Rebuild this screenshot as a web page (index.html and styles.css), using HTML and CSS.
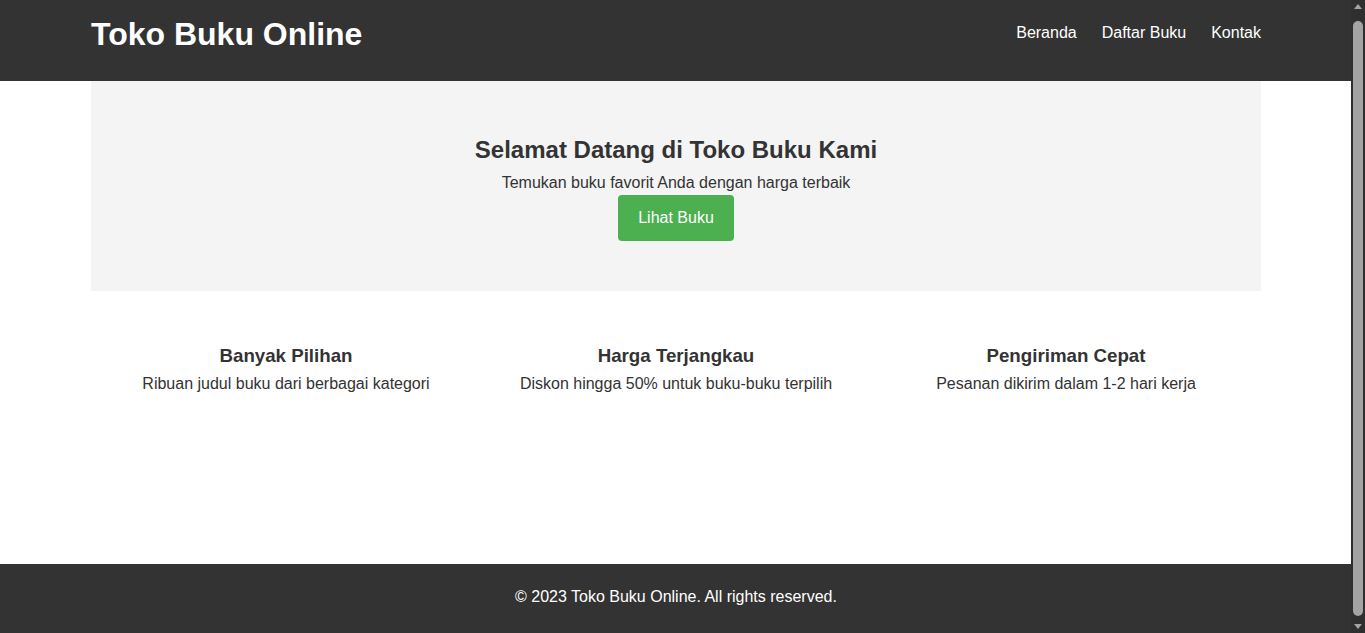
FILE: index.html
```html
<!DOCTYPE html>
<html lang="id">
<head>
<meta charset="utf-8">
<title>Toko Buku Online</title>
<link rel="stylesheet" href="styles.css">
</head>
<body>
<header class="site-header">
  <div class="container header-inner">
    <h1 class="logo">Toko Buku Online</h1>
    <nav class="nav">
      <a href="#">Beranda</a>
      <a href="#">Daftar Buku</a>
      <a href="#">Kontak</a>
    </nav>
  </div>
</header>
<main class="container">
  <section class="hero">
    <h2>Selamat Datang di Toko Buku Kami</h2>
    <p>Temukan buku favorit Anda dengan harga terbaik</p>
    <a class="btn" href="#">Lihat Buku</a>
  </section>
  <section class="features">
    <div class="feature">
      <h3>Banyak Pilihan</h3>
      <p>Ribuan judul buku dari berbagai kategori</p>
    </div>
    <div class="feature">
      <h3>Harga Terjangkau</h3>
      <p>Diskon hingga 50% untuk buku-buku terpilih</p>
    </div>
    <div class="feature">
      <h3>Pengiriman Cepat</h3>
      <p>Pesanan dikirim dalam 1-2 hari kerja</p>
    </div>
  </section>
</main>
<footer class="site-footer">
  <p>&copy; 2023 Toko Buku Online. All rights reserved.</p>
</footer>
<div class="scrollbar" aria-hidden="true">
  <svg class="arrow" width="14" height="12" viewBox="0 0 14 12"><polygon points="3,9 11,9 7,4" fill="#a3a3a3"/></svg>
  <div class="thumb"></div>
  <svg class="arrow" width="14" height="12" viewBox="0 0 14 12"><polygon points="3,3 11,3 7,8" fill="#a3a3a3"/></svg>
</div>
</body>
</html>
```
FILE: styles.css
```css
body {
  margin: 0 13px 0 0;
  font-family: "Liberation Sans", Arial, sans-serif;
  font-size: 16px;
  color: #333;
  background: #fff;
}

.container {
  max-width: 1170px;
  margin: 0 auto;
}

.site-header {
  background: #333;
  color: #fff;
  padding: 16px 0 28px;
}

.header-inner {
  display: flex;
  justify-content: space-between;
  align-items: flex-start;
}

.logo {
  margin: 0;
  font-size: 32px;
  font-weight: bold;
}

.nav {
  display: flex;
  gap: 25px;
  margin-top: 8px;
}

.nav a {
  color: #fff;
  text-decoration: none;
}

.hero {
  background: #f4f4f4;
  text-align: center;
  padding: 55px 20px 50px;
}

.hero h2 {
  margin: 0 0 10px;
  font-size: 24px;
  font-weight: bold;
}

.hero p {
  margin: 0 0 3px;
}

.btn {
  display: inline-block;
  background: #4caf50;
  color: #fff;
  padding: 14px 20px;
  border-radius: 4px;
  text-decoration: none;
}

.features {
  display: grid;
  grid-template-columns: repeat(3, 1fr);
  box-sizing: border-box;
  min-height: 273px;
  padding-top: 54px;
  align-content: start;
}

.feature {
  text-align: center;
}

.feature h3 {
  margin: 0 0 8px;
  font-size: 18.72px;
}

.feature p {
  margin: 0;
}

.site-footer {
  background: #333;
  color: #fff;
  text-align: center;
  padding: 24px 0 40px;
}

.site-footer p {
  margin: 0;
}

/* emulated browser scrollbar (overlay chrome) */
.scrollbar {
  position: fixed;
  top: 0;
  right: 0;
  width: 14px;
  height: 100%;
  background: #2f2f2f;
  display: flex;
  flex-direction: column;
  align-items: center;
}

.arrow {
  flex: none;
}

.thumb {
  flex: 1;
  width: 10px;
  margin: 9px 0 5px;
  background: #a3a3a3;
  border-radius: 5px;
}
```
